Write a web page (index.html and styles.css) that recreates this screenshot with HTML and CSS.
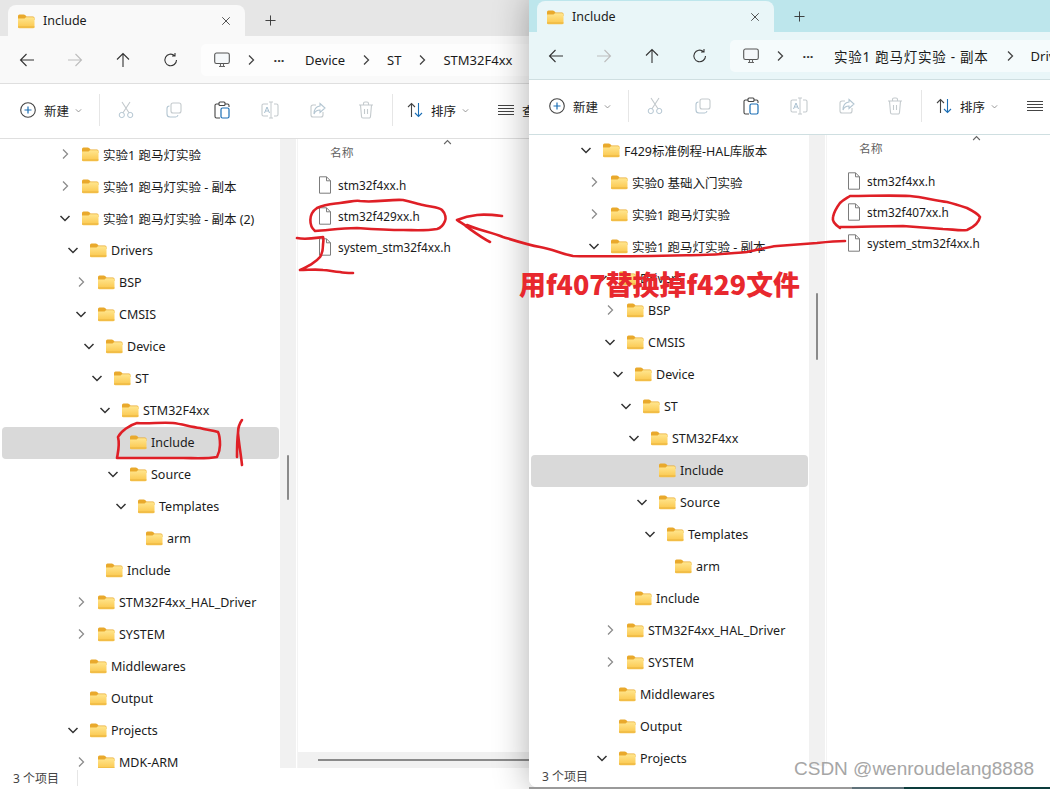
FILE: index.html
```html
<!DOCTYPE html>
<html lang="zh">
<head>
<meta charset="utf-8">
<title>Include</title>
<link rel="stylesheet" href="styles.css">
</head>
<body>
<svg class="defs" width="0" height="0">
  <defs>
    <linearGradient id="fg" x1="0" y1="0" x2="0" y2="1"><stop offset="0" stop-color="#ffe68f"/><stop offset="1" stop-color="#fbc64a"/></linearGradient>
    <symbol id="folder" viewBox="0 0 18 16"><path d="M1 3a1.500 1.500 0 0 1 1.500-1.500h4.200c.6 0 1 .2 1.400.6L9.500 3.500H16a1.500 1.500 0 0 1 1.500 1.500v2H1z" fill="#e9a92c"/><path d="M1 5.500h6.500L9 4.200h7a1.500 1.500 0 0 1 1.500 1.500v8a1.500 1.500 0 0 1-1.500 1.500H2.500A1.500 1.500 0 0 1 1 13.700z" fill="url(#fg)"/><path d="M1 14h16.500" stroke="#e9b23f" stroke-width="1"/></symbol>
    <symbol id="file" viewBox="0 0 14 18"><path d="M1.500.8h7l4 4v12.400h-11zM8.500.8v4h4" fill="#fff" stroke="#7c7c7c" stroke-width="1"/></symbol>
    <symbol id="cr" viewBox="0 0 12 12"><path d="M4 1.500 8.500 6 4 10.500" fill="none" stroke="currentColor" stroke-width="1.300"/></symbol>
    <symbol id="cd" viewBox="0 0 12 12"><path d="M1.500 4 6 8.500 10.500 4" fill="none" stroke="currentColor" stroke-width="1.500"/></symbol>
    <symbol id="close" viewBox="0 0 12 12"><path d="m1.500 1.500 9 9M10.500 1.500l-9 9" fill="none" stroke="currentColor" stroke-width="1"/></symbol>
    <symbol id="add" viewBox="0 0 12 12"><path d="M6 .5v11M.5 6h11" fill="none" stroke="currentColor" stroke-width="1"/></symbol>
    <symbol id="back" viewBox="0 0 16 16"><path d="M15 8H1.500M7.500 2 1.500 8l6 6" fill="none" stroke="currentColor" stroke-width="1.100"/></symbol>
    <symbol id="fwd" viewBox="0 0 16 16"><path d="M1 8h13.500M8.500 2l6 6-6 6" fill="none" stroke="currentColor" stroke-width="1.100"/></symbol>
    <symbol id="up" viewBox="0 0 16 16"><path d="M8 15V1.500M2 7.500l6-6 6 6" fill="none" stroke="currentColor" stroke-width="1.100"/></symbol>
    <symbol id="refresh" viewBox="0 0 16 16"><path d="M13.500 8a5.800 5.800 0 1 1-2-4.400M12 1v3h-3" fill="none" stroke="currentColor" stroke-width="1.100"/></symbol>
    <symbol id="pc" viewBox="0 0 16 16"><rect x=".7" y="1" width="14.600" height="10.500" rx="1.800" fill="#f5f8fa" stroke="#555" stroke-width="1.100"/><path d="M5 14.500h6M6.500 11.500v3M9.500 11.500v3" stroke="#666" stroke-width="1.100"/></symbol>
    <symbol id="plus" viewBox="0 0 16 16"><circle cx="8" cy="8" r="7.300" fill="none" stroke="#444" stroke-width="1.100"/><path d="M8 4.500v7M4.500 8h7" stroke="#1c6fb5" stroke-width="1.200"/></symbol>
    <symbol id="cut" viewBox="0 0 16 18"><circle cx="3.800" cy="14" r="2.600" fill="none" stroke="#b4c6d2"/><circle cx="12.200" cy="14" r="2.600" fill="none" stroke="#b4c6d2"/><path d="M5 11.800 12 1M11 11.800 4 1" fill="none" stroke="#c2c8cc" stroke-width="1.100"/></symbol>
    <symbol id="copy" viewBox="0 0 16 16"><rect x="5" y="1" width="10" height="10" rx="2" fill="none" stroke="#c4cacd" stroke-width="1.100"/><path d="M3.500 4A2.500 2.500 0 0 0 1 6.500V12a3 3 0 0 0 3 3h5.500A2.500 2.500 0 0 0 12 13" fill="none" stroke="#b4c6d2" stroke-width="1.100"/></symbol>
    <symbol id="paste" viewBox="0 0 16 18"><path d="M5 3H2.500A1.500 1.500 0 0 0 1 4.500v11A1.500 1.500 0 0 0 2.500 17H6M11 3h2.500A1.500 1.500 0 0 1 15 4.500V6" fill="none" stroke="#444" stroke-width="1.100"/><rect x="5" y="1" width="6" height="3.500" rx="1" fill="#fff" stroke="#444" stroke-width="1.100"/><rect x="7" y="7" width="8" height="10" rx="1.500" fill="#fff" stroke="#1c6fb5" stroke-width="1.200"/></symbol>
    <symbol id="rename" viewBox="0 0 18 18"><path d="M7 3H2.500A1.500 1.500 0 0 0 1 4.500v9A1.500 1.500 0 0 0 2.500 15H7M13 3h2.500A1.500 1.500 0 0 1 17 4.500v9a1.500 1.500 0 0 1-1.500 1.500H13" fill="none" stroke="#c4cacd" stroke-width="1.100"/><path d="M10 1v16M8 1h4M8 17h4" stroke="#c4cacd" stroke-width="1"/><path d="m3.500 12 2.500-6 2.500 6M4.500 10h3" fill="none" stroke="#a9c0d0" stroke-width="1"/></symbol>
    <symbol id="share" viewBox="0 0 16 16"><path d="M6 3H3a2 2 0 0 0-2 2v8a2 2 0 0 0 2 2h8a2 2 0 0 0 2-2v-3" fill="none" stroke="#c4cacd" stroke-width="1.100"/><path d="M10 1.500 15 6l-5 4.500V8C7 8 5 9.500 4 12c0-4 2-7.500 6-8z" fill="none" stroke="#b4c6d2" stroke-width="1.100"/></symbol>
    <symbol id="trash" viewBox="0 0 16 18"><path d="M1 4h14M5.500 4V2.500A1.500 1.500 0 0 1 7 1h2a1.500 1.500 0 0 1 1.500 1.500V4M2.500 4l1 11.500A1.500 1.500 0 0 0 5 17h6a1.500 1.500 0 0 0 1.500-1.500l1-11.500M6.500 8v5M9.500 8v5" fill="none" stroke="#c4cacd" stroke-width="1.100"/></symbol>
    <symbol id="sort" viewBox="0 0 16 16"><path d="M4.500 15V1.500M1 5l3.500-3.500L8 5" fill="none" stroke="#444" stroke-width="1.100"/><path d="M11.500 1v13.500M8 11l3.500 3.500L15 11" fill="none" stroke="#1c6fb5" stroke-width="1.100"/></symbol>
    <symbol id="view" viewBox="0 0 16 16"><path d="M0 3.500h16M0 6.500h16M0 9.500h16M0 12.500h16" stroke="#444" stroke-width="1"/></symbol>
  </defs>
</svg>

<main class="desktop">
  <section class="win win-left">
    <div class="tabbar">
      <div class="tab">
        <svg class="i-folder"><use href="#folder"/></svg>
        <span class="tab-title">Include</span>
        <svg class="tab-x"><use href="#close"/></svg>
      </div>
      <svg class="tab-plus"><use href="#add"/></svg>
    </div>
    <div class="addr">
      <span class="nav"><svg class="i16"><use href="#back"/></svg></span>
      <span class="nav off"><svg class="i16"><use href="#fwd"/></svg></span>
      <span class="nav"><svg class="i16"><use href="#up"/></svg></span>
      <span class="nav"><svg class="i16"><use href="#refresh"/></svg></span>
      <div class="pill">
        <svg class="i16 pc"><use href="#pc"/></svg>
        <svg class="i12 sep1"><use href="#cr"/></svg>
        <span class="dots">···</span>
        <span class="crumb">Device</span>
        <svg class="i12"><use href="#cr"/></svg>
        <span class="crumb">ST</span>
        <svg class="i12"><use href="#cr"/></svg>
        <span class="crumb">STM32F4xx</span>
      </div>
    </div>
    <div class="toolbar">
      <svg class="i16 tb-plus"><use href="#plus"/></svg><span class="tb-label">新建</span><svg class="i-mini"><use href="#cd"/></svg>
      <span class="tb-sep"></span>
      <span class="slot"><svg class="i18"><use href="#cut"/></svg></span>
      <span class="slot"><svg class="i16"><use href="#copy"/></svg></span>
      <span class="slot"><svg class="i18"><use href="#paste"/></svg></span>
      <span class="slot"><svg class="i18"><use href="#rename"/></svg></span>
      <span class="slot"><svg class="i16"><use href="#share"/></svg></span>
      <span class="slot"><svg class="i18"><use href="#trash"/></svg></span>
      <span class="tb-sep sep2"></span>
      <svg class="i16 tb-sort"><use href="#sort"/></svg><span class="tb-label">排序</span><svg class="i-mini"><use href="#cd"/></svg>
      <svg class="i16 tb-view"><use href="#view"/></svg><span class="tb-label">查看</span>
    </div>
    <div class="body">
      <div class="tree">
        <div class="row d0"><svg class="chev"><use href="#cr"/></svg><svg class="i-folder"><use href="#folder"/></svg><span>实验1 跑马灯实验</span></div>
        <div class="row d0"><svg class="chev"><use href="#cr"/></svg><svg class="i-folder"><use href="#folder"/></svg><span>实验1 跑马灯实验 - 副本</span></div>
        <div class="row d0"><svg class="chev open"><use href="#cd"/></svg><svg class="i-folder"><use href="#folder"/></svg><span>实验1 跑马灯实验 - 副本 (2)</span></div>
        <div class="row d1"><svg class="chev open"><use href="#cd"/></svg><svg class="i-folder"><use href="#folder"/></svg><span>Drivers</span></div>
        <div class="row d2"><svg class="chev"><use href="#cr"/></svg><svg class="i-folder"><use href="#folder"/></svg><span>BSP</span></div>
        <div class="row d2"><svg class="chev open"><use href="#cd"/></svg><svg class="i-folder"><use href="#folder"/></svg><span>CMSIS</span></div>
        <div class="row d3"><svg class="chev open"><use href="#cd"/></svg><svg class="i-folder"><use href="#folder"/></svg><span>Device</span></div>
        <div class="row d4"><svg class="chev open"><use href="#cd"/></svg><svg class="i-folder"><use href="#folder"/></svg><span>ST</span></div>
        <div class="row d5"><svg class="chev open"><use href="#cd"/></svg><svg class="i-folder"><use href="#folder"/></svg><span>STM32F4xx</span></div>
        <div class="row d6 sel"><span class="chev"></span><svg class="i-folder"><use href="#folder"/></svg><span>Include</span></div>
        <div class="row d6"><svg class="chev open"><use href="#cd"/></svg><svg class="i-folder"><use href="#folder"/></svg><span>Source</span></div>
        <div class="row d7"><svg class="chev open"><use href="#cd"/></svg><svg class="i-folder"><use href="#folder"/></svg><span>Templates</span></div>
        <div class="row d8"><span class="chev"></span><svg class="i-folder"><use href="#folder"/></svg><span>arm</span></div>
        <div class="row d3"><span class="chev"></span><svg class="i-folder"><use href="#folder"/></svg><span>Include</span></div>
        <div class="row d2"><svg class="chev"><use href="#cr"/></svg><svg class="i-folder"><use href="#folder"/></svg><span>STM32F4xx_HAL_Driver</span></div>
        <div class="row d2"><svg class="chev"><use href="#cr"/></svg><svg class="i-folder"><use href="#folder"/></svg><span>SYSTEM</span></div>
        <div class="row d1"><span class="chev"></span><svg class="i-folder"><use href="#folder"/></svg><span>Middlewares</span></div>
        <div class="row d1"><span class="chev"></span><svg class="i-folder"><use href="#folder"/></svg><span>Output</span></div>
        <div class="row d1"><svg class="chev open"><use href="#cd"/></svg><svg class="i-folder"><use href="#folder"/></svg><span>Projects</span></div>
        <div class="row d2"><svg class="chev"><use href="#cr"/></svg><svg class="i-folder"><use href="#folder"/></svg><span>MDK-ARM</span></div>
      </div>
      <div class="vscroll"><span class="thumb thumb-left"></span></div>
      <div class="list">
        <div class="list-head"><span>名称</span><svg class="caret"><use href="#cd"/></svg></div>
        <div class="file"><svg class="i-file"><use href="#file"/></svg><span>stm32f4xx.h</span></div>
        <div class="file"><svg class="i-file"><use href="#file"/></svg><span>stm32f429xx.h</span></div>
        <div class="file"><svg class="i-file"><use href="#file"/></svg><span>system_stm32f4xx.h</span></div>
        <div class="hscroll"><span class="hthumb"></span></div>
      </div>
    </div>
    <div class="status"><span>3 个项目</span><span class="status-sep"></span></div>
  </section>

  <section class="win win-right">
    <div class="tabbar">
      <div class="tab">
        <svg class="i-folder"><use href="#folder"/></svg>
        <span class="tab-title">Include</span>
        <svg class="tab-x"><use href="#close"/></svg>
      </div>
      <svg class="tab-plus"><use href="#add"/></svg>
    </div>
    <div class="addr">
      <span class="nav"><svg class="i16"><use href="#back"/></svg></span>
      <span class="nav off"><svg class="i16"><use href="#fwd"/></svg></span>
      <span class="nav"><svg class="i16"><use href="#up"/></svg></span>
      <span class="nav"><svg class="i16"><use href="#refresh"/></svg></span>
      <div class="pill">
        <svg class="i16 pc"><use href="#pc"/></svg>
        <svg class="i12 sep1"><use href="#cr"/></svg>
        <span class="dots">···</span>
        <span class="crumb crumb-wide">实验1 跑马灯实验 - 副本</span>
        <svg class="i12"><use href="#cr"/></svg>
        <span class="crumb">Drivers</span>
      </div>
    </div>
    <div class="toolbar">
      <svg class="i16 tb-plus"><use href="#plus"/></svg><span class="tb-label">新建</span><svg class="i-mini"><use href="#cd"/></svg>
      <span class="tb-sep"></span>
      <span class="slot"><svg class="i18"><use href="#cut"/></svg></span>
      <span class="slot"><svg class="i16"><use href="#copy"/></svg></span>
      <span class="slot"><svg class="i18"><use href="#paste"/></svg></span>
      <span class="slot"><svg class="i18"><use href="#rename"/></svg></span>
      <span class="slot"><svg class="i16"><use href="#share"/></svg></span>
      <span class="slot"><svg class="i18"><use href="#trash"/></svg></span>
      <span class="tb-sep sep2"></span>
      <svg class="i16 tb-sort"><use href="#sort"/></svg><span class="tb-label">排序</span><svg class="i-mini"><use href="#cd"/></svg>
      <svg class="i16 tb-view"><use href="#view"/></svg>
    </div>
    <div class="body">
      <div class="tree">
        <div class="row dm"><svg class="chev open"><use href="#cd"/></svg><svg class="i-folder"><use href="#folder"/></svg><span>F429标准例程-HAL库版本</span></div>
        <div class="row d0"><svg class="chev"><use href="#cr"/></svg><svg class="i-folder"><use href="#folder"/></svg><span>实验0 基础入门实验</span></div>
        <div class="row d0"><svg class="chev"><use href="#cr"/></svg><svg class="i-folder"><use href="#folder"/></svg><span>实验1 跑马灯实验</span></div>
        <div class="row d0"><svg class="chev open"><use href="#cd"/></svg><svg class="i-folder"><use href="#folder"/></svg><span>实验1 跑马灯实验 - 副本</span></div>
        <div class="row d1"><svg class="chev open"><use href="#cd"/></svg><svg class="i-folder"><use href="#folder"/></svg><span>Drivers</span></div>
        <div class="row d2"><svg class="chev"><use href="#cr"/></svg><svg class="i-folder"><use href="#folder"/></svg><span>BSP</span></div>
        <div class="row d2"><svg class="chev open"><use href="#cd"/></svg><svg class="i-folder"><use href="#folder"/></svg><span>CMSIS</span></div>
        <div class="row d3"><svg class="chev open"><use href="#cd"/></svg><svg class="i-folder"><use href="#folder"/></svg><span>Device</span></div>
        <div class="row d4"><svg class="chev open"><use href="#cd"/></svg><svg class="i-folder"><use href="#folder"/></svg><span>ST</span></div>
        <div class="row d5"><svg class="chev open"><use href="#cd"/></svg><svg class="i-folder"><use href="#folder"/></svg><span>STM32F4xx</span></div>
        <div class="row d6 sel"><span class="chev"></span><svg class="i-folder"><use href="#folder"/></svg><span>Include</span></div>
        <div class="row d6"><svg class="chev open"><use href="#cd"/></svg><svg class="i-folder"><use href="#folder"/></svg><span>Source</span></div>
        <div class="row d7"><svg class="chev open"><use href="#cd"/></svg><svg class="i-folder"><use href="#folder"/></svg><span>Templates</span></div>
        <div class="row d8"><span class="chev"></span><svg class="i-folder"><use href="#folder"/></svg><span>arm</span></div>
        <div class="row d3"><span class="chev"></span><svg class="i-folder"><use href="#folder"/></svg><span>Include</span></div>
        <div class="row d2"><svg class="chev"><use href="#cr"/></svg><svg class="i-folder"><use href="#folder"/></svg><span>STM32F4xx_HAL_Driver</span></div>
        <div class="row d2"><svg class="chev"><use href="#cr"/></svg><svg class="i-folder"><use href="#folder"/></svg><span>SYSTEM</span></div>
        <div class="row d1"><span class="chev"></span><svg class="i-folder"><use href="#folder"/></svg><span>Middlewares</span></div>
        <div class="row d1"><span class="chev"></span><svg class="i-folder"><use href="#folder"/></svg><span>Output</span></div>
        <div class="row d1"><svg class="chev open"><use href="#cd"/></svg><svg class="i-folder"><use href="#folder"/></svg><span>Projects</span></div>
      </div>
      <div class="vscroll"><span class="thumb thumb-right"></span></div>
      <div class="list">
        <div class="list-head"><span>名称</span><svg class="caret"><use href="#cd"/></svg></div>
        <div class="file"><svg class="i-file"><use href="#file"/></svg><span>stm32f4xx.h</span></div>
        <div class="file"><svg class="i-file"><use href="#file"/></svg><span>stm32f407xx.h</span></div>
        <div class="file"><svg class="i-file"><use href="#file"/></svg><span>system_stm32f4xx.h</span></div>
      </div>
    </div>
    <div class="status"><span>3 个项目</span></div>
  </section>

  <svg class="ink" viewBox="0 0 1050 789" width="1050" height="789">
    <path d="M315 231C309 226 308 214 317 208C326 204 333 204 340 203C350 202 355 200 360 201C375 203 390 199 403 200C412 202 418 204 423 205C432 207 439 207 442 210C446 214 446 219 445 221C443 226 441 228 437 229C425 231 414 230 403 230C388 230 372 229 357 228C340 228 330 230 315 231Z"/>
    <path d="M502 216C494 215 485 214 477 215C468 216 462 218 457 220C461 223 464 224 467 227C474 232 482 238 490 242M467 225C478 230 491 232 503 237C516 241 528 245 540 247C552 249 562 254 573 256C612 257 651 256 700 255C718 255 733 253 747 252C757 250 767 247 777 246C790 245 803 244 817 243C826 242 836 241 845 241"/>
    <path d="M297 238C306 240 315 238 323 237C324 240 323 243 323 245C323 250 322 254 320 257C317 261 313 263 310 265C306 267 303 269 300 270C308 270 316 269 323 270C329 270 334 272 340 272C344 273 349 273 353 273"/>
    <path d="M840 228C834 224 832 221 833 217C834 212 837 207 840 203C843 200 847 198 850 196C870 196 890 195 910 196C923 197 936 201 947 202C955 204 961 206 967 208C973 211 978 214 980 217C979 222 974 227 967 230C959 231 951 229 943 229C930 228 916 227 903 226C882 226 861 227 840 227"/>
    <path d="M117 458C118 452 120 445 118 437C121 431 130 425 137 423C149 424 161 422 173 423C182 424 191 427 200 428C206 430 212 430 218 432C220 436 220 441 220 445C220 449 219 453 217 457C206 459 194 458 183 458C161 458 139 458 117 458Z"/>
    <path d="M242 420C239 424 238 429 238 433C239 444 241 455 242 465M238 433C237 441 237 449 237 457"/>
  </svg>
  <p class="note">用f407替换掉f429文件</p>
  <p class="mark">CSDN @wenroudelang8888</p>
  <div class="taskbar"></div>
</main>
</body>
</html>
```
FILE: styles.css
```css
* { box-sizing: border-box; }
html, body { margin: 0; padding: 0; height: 100%; overflow: hidden; background: #fff; }
body { font-family: "Noto Sans", "Noto Sans CJK SC", sans-serif; font-size: 12.5px; color: #1b1b1b; }
.defs { position: absolute; }
.desktop { position: relative; width: 1050px; height: 789px; overflow: hidden; }

.win { position: absolute; display: flex; flex-direction: column; overflow: hidden; background: #fff; }
.win-left { left: 0; top: 0; width: 560px; height: 789px; --bar: #e6e6e6; --tab: #f9f9f9; --pill: #fdfdfd; --line: #dfdfdf; }
.win-right { left: 529px; top: -4px; width: 560px; height: 791px; border-radius: 0 0 0 8px; box-shadow: 0 0 36px rgba(0,0,0,.32); --bar: #bde6ec; --tab: #e9f6f8; --pill: #f5fbfc; --line: #cfdfe1; }

.tabbar { height: 36px; flex: none; display: flex; align-items: flex-end; padding-left: 8px; background: var(--bar); }
.tab { width: 237px; height: 31px; display: flex; align-items: center; padding-left: 9px; padding-right: 14px; border-radius: 8px 8px 0 0; background: var(--tab); }
.tab-title { margin-left: 8px; flex: 1; }
.tab-x { width: 10px; height: 10px; flex: none; color: #333; }
.tab-plus { width: 11px; height: 11px; margin-left: 20px; margin-bottom: 10px; flex: none; color: #333; }

.addr { height: 48px; flex: none; display: flex; align-items: center; padding-left: 3px; background: var(--tab); border-bottom: 1px solid var(--line); }
.nav { width: 48px; flex: none; display: flex; justify-content: center; color: #333; }
.nav.off { color: #bdbdbd; }
.pill { margin-left: 6px; height: 32px; flex: none; width: 400px; display: flex; align-items: center; padding-left: 13px; background: var(--pill); border-radius: 5px; font-size: 13px; white-space: nowrap; }
.pc { flex: none; }
.i12 { width: 12px; height: 12px; flex: none; color: #444; }
.sep1 { margin-left: 15px; }
.dots { width: 16px; margin-left: 14px; font-weight: 700; color: #333; text-align: center; }
.crumb { margin: 0 15px; }
.dots + .crumb { margin-left: 18px; }
.crumb-wide { font-size: 13.5px; letter-spacing: .75px; }
.i16 { width: 16px; height: 16px; flex: none; }
.i18 { width: 18px; height: 18px; flex: none; }

.toolbar { height: 55px; flex: none; display: flex; align-items: center; padding: 0 0 2px 20px; border-bottom: 1px solid var(--line); white-space: nowrap; color: #222; }
.tb-label { margin-left: 8px; }
.i-mini { width: 7px; height: 7px; margin-left: 6px; flex: none; color: #888; }
.tb-sep { width: 1px; height: 32px; margin-left: 17px; margin-right: 2px; background: #e6e6e6; flex: none; }
.sep2 { margin-left: 2px; margin-right: 0; }
.slot { width: 48px; flex: none; display: flex; justify-content: center; }
.tb-sort { margin-left: 14px; }
.tb-view { margin-left: 29px; }

.body { flex: 1; min-height: 0; display: flex; }
.tree { width: 280px; flex: none; overflow: hidden; }
.row { height: 32px; padding-bottom: 2px; display: flex; align-items: center; margin-left: 2px; margin-right: 1px; border-radius: 4px; white-space: nowrap; }
.row.sel { background: #d9d9d9; }
.dm { padding-left: 49px; }
.d0 { padding-left: 57px; }
.d1 { padding-left: 65px; }
.d2 { padding-left: 73px; }
.d3 { padding-left: 81px; }
.d4 { padding-left: 89px; }
.d5 { padding-left: 97px; }
.d6 { padding-left: 105px; }
.d7 { padding-left: 113px; }
.d8 { padding-left: 121px; }
.chev { width: 12px; height: 12px; margin-right: 10px; flex: none; color: #8c8c8c; }
.chev.open { color: #333; }
.i-folder { width: 18px; height: 16px; margin-right: 4px; flex: none; }
.tab .i-folder { margin-right: 0; }

.vscroll { width: 16px; flex: none; background: #f1f1f1; }
.thumb { display: block; width: 2px; margin-left: 7px; background: #8a8a8a; border-radius: 1px; }
.thumb-left { height: 45px; margin-top: 316px; }
.thumb-right { height: 67px; margin-top: 158px; }

.list { flex: 1; min-width: 0; margin-left: 1px; display: flex; flex-direction: column; border-left: 1px solid #f4f4f4; font-size: 11.8px; }
.list-head { height: 25px; margin-bottom: 5px; flex: none; display: flex; align-items: center; padding-left: 32px; color: #5f5f5f; position: relative; }
.caret { position: absolute; left: 145px; top: -1px; width: 9px; height: 9px; transform: rotate(180deg); color: #666; }
.file { height: 31px; flex: none; display: flex; align-items: center; padding-left: 20px; }
.i-file { width: 14px; height: 18px; margin-right: 6px; flex: none; }
.hscroll { margin-top: auto; height: 16px; flex: none; background: #f1f1f1; display: flex; align-items: center; padding-left: 20px; }
.hthumb { width: 300px; height: 2px; background: #8a8a8a; }

.status { height: 21px; flex: none; display: flex; align-items: center; padding: 0 0 1px 13px; color: #444; font-size: 12px; background: #fff; }
.status-sep { width: 1px; height: 16px; margin-left: 18px; background: #e6e6e6; }

.ink { position: absolute; left: 0; top: 0; pointer-events: none; }
.ink path { fill: none; stroke: #df1f26; stroke-width: 2.600; stroke-linecap: round; stroke-linejoin: round; }
.note { position: absolute; left: 519px; top: 265px; margin: 0; font: 900 26.9px/38px "Noto Sans CJK SC", "Noto Sans", sans-serif; color: #e8282e; white-space: nowrap; }
.mark { position: absolute; left: 794px; top: 757px; margin: 0; font: 400 19px/24px "Liberation Sans", sans-serif; color: #a6a6a6; white-space: nowrap; }
.taskbar { position: absolute; left: 529px; right: 0; bottom: 0; height: 2px; background: linear-gradient(90deg, #9a9a9a 0 62%, #60727a 62% 72%, #0c3c3c 72%); }
```
